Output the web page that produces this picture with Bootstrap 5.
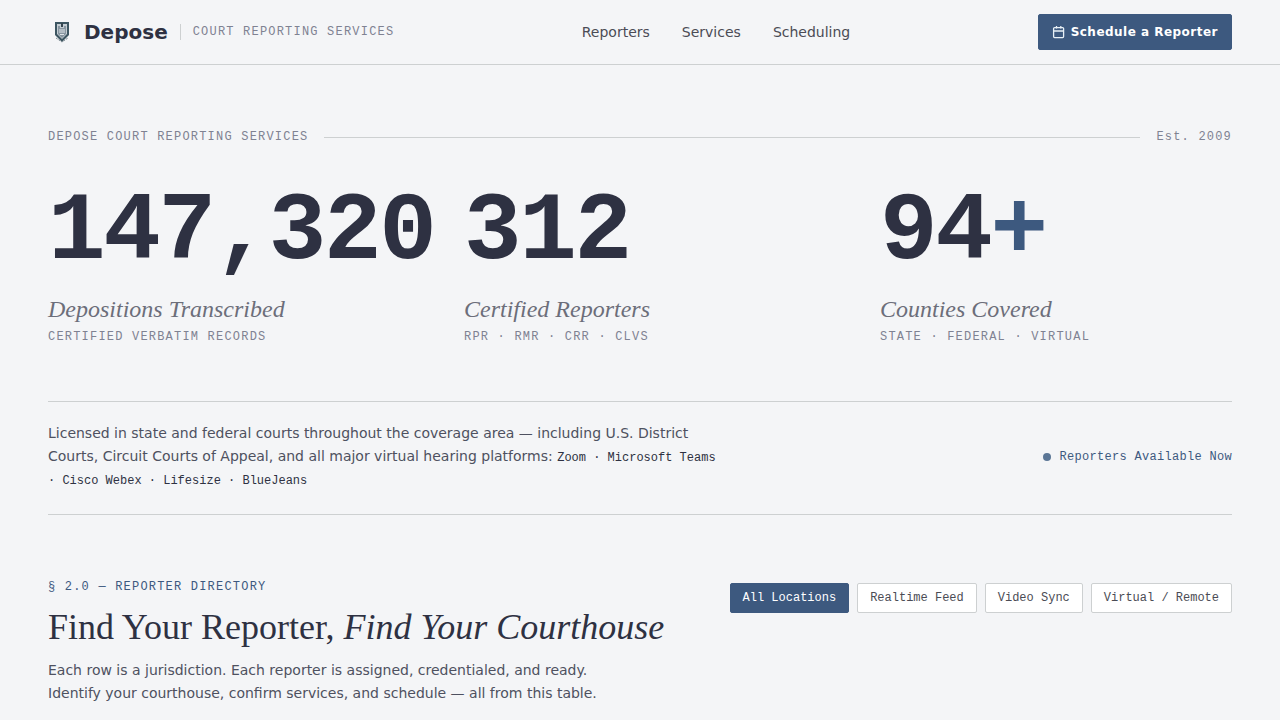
<!DOCTYPE html>
<html lang="en">
<head>
<meta charset="utf-8">
<meta name="viewport" content="width=device-width, initial-scale=1">
<title>Depose Court Reporting Services</title>
<link href="https://cdn.jsdelivr.net/npm/bootstrap@5.3.0/dist/css/bootstrap.min.css" rel="stylesheet">
<style>
  :root {
    --ink: #2e3142;
    --body: #4e5160;
    --muted-ink: #7f8292;
    --accent: #3d597f;
    --rule: #cdd0d1;
    --paper: #f4f5f7;
  }
  body {
    background: var(--paper);
    color: var(--body);
    font-family: "DejaVu Sans", sans-serif;
    font-size: 14px;
    line-height: 23px;
  }
  .mono { font-family: "Liberation Mono", monospace; font-size: 12px; line-height: 18px; }
  .spaced { letter-spacing: .1em; color: var(--muted-ink); }
  .serif { font-family: "Liberation Serif", serif; }
  .accent { color: var(--accent); }
  .site-header { min-height: 65px; border-bottom: 1px solid var(--rule); }
  .brand-name { font-size: 20px; line-height: 30px; font-weight: 700; color: var(--ink); }
  .brand-rule { width: 1px; height: 16px; margin: 0 12px; background: var(--rule); }
  .site-nav { gap: 32px; }
  .site-nav .nav-link { padding: 0; color: #4b4c55; }
  .btn-schedule {
    --bs-btn-color: #fff;
    --bs-btn-bg: var(--accent);
    --bs-btn-border-color: var(--accent);
    --bs-btn-hover-color: #fff;
    --bs-btn-hover-bg: #314a6c;
    --bs-btn-font-size: 12px;
    --bs-btn-font-weight: 700;
    --bs-btn-line-height: 18px;
    --bs-btn-padding-x: 13px;
    --bs-btn-padding-y: 8px;
    --bs-btn-border-radius: 2px;
    gap: 5px;
    letter-spacing: .04em;
  }
  .hero { padding-top: 63px; }
  .eyebrow-rule { height: 1px; background: var(--rule); }
  .stats { --bs-gutter-x: 64px; margin-top: 39px; }
  .figure-number {
    font-family: "Liberation Mono", monospace;
    font-size: 96px; line-height: 96px; font-weight: 700;
    letter-spacing: -.025em; color: var(--ink); white-space: nowrap;
  }
  .figure-label { font-size: 24px; line-height: 36px; font-style: italic; color: #6c6e7a; margin: 10px 0 1px; }
  .licence {
    margin-top: 55px; padding: 20px 0 23px;
    border-top: 1px solid var(--rule); border-bottom: 1px solid var(--rule);
  }
  .licence p { max-width: 672px; }
  .platforms { color: var(--ink); }
  .available { letter-spacing: .025em; }
  .status-dot { width: 8px; height: 8px; background: #5b7696; }
  .directory { padding: 63px 0 32px; }
  .directory h2 { font-size: 36px; line-height: 44px; font-weight: 400; color: var(--ink); margin: 9px 0 10px; }
  .directory p { max-width: 560px; }
  .btn-filter {
    --bs-btn-font-family: "Liberation Mono", monospace;
    --bs-btn-font-size: 12px;
    --bs-btn-line-height: 18px;
    --bs-btn-padding-x: 12px;
    --bs-btn-padding-y: 5px;
    --bs-btn-border-radius: 2px;
    --bs-btn-color: #4b4c55;
    --bs-btn-bg: #fff;
    --bs-btn-border-color: var(--rule);
    --bs-btn-hover-color: var(--ink);
    --bs-btn-hover-border-color: var(--accent);
    --bs-btn-active-color: #fff;
    --bs-btn-active-bg: var(--accent);
    --bs-btn-active-border-color: var(--accent);
  }
  .filters { margin-top: 5px; }
</style>
</head>
<body>
<header class="site-header d-flex flex-wrap align-items-center justify-content-between px-5">
  <div class="d-flex align-items-center">
    <a href="#" class="d-flex align-items-center gap-2 text-decoration-none">
      <svg width="28" height="28" viewBox="0 0 28 28" aria-hidden="true">
        <path d="M7 4h14v13l-7 7-7-7z" fill="#3c5561"/>
        <path d="M9 6h10v10l-5 5-5-5z" fill="#c3ccd2"/>
        <path d="M10 8h2v2h4V8h2v8l-4 4-4-4z" fill="#8795a0"/>
        <path d="M13 5h2v4h-2z" fill="#34444f"/>
        <path d="M11 12h6M11 14h6M12 16.500h4" stroke="#dfe5e9" fill="none"/>
        <path d="M8 20l6 4 6-4" stroke="#7d8b94" stroke-dasharray="2 1" fill="none"/>
      </svg>
      <span class="brand-name">Depose</span>
    </a>
    <span class="brand-rule"></span>
    <span class="mono spaced">COURT REPORTING SERVICES</span>
  </div>
  <nav class="nav site-nav" aria-label="Main">
    <a class="nav-link" href="#reporters">Reporters</a>
    <a class="nav-link" href="#services">Services</a>
    <a class="nav-link" href="#scheduling">Scheduling</a>
  </nav>
  <button type="button" class="btn btn-schedule d-flex align-items-center">
    <svg width="14" height="14" viewBox="0 0 14 14" fill="none" stroke="#e8f0f6" stroke-width="1.300" aria-hidden="true">
      <rect x="1.600" y="2.600" width="10" height="10" rx="1"/>
      <path d="M1.600 6h10M4.500 1v2.600M8.800 1v2.600"/>
    </svg>
    Schedule a Reporter
  </button>
</header>

<main class="px-5">
  <section class="hero">
    <div class="d-flex align-items-center gap-3">
      <span class="mono spaced">DEPOSE COURT REPORTING SERVICES</span>
      <span class="eyebrow-rule flex-grow-1"></span>
      <span class="mono spaced">Est. 2009</span>
    </div>
    <div class="row stats">
      <div class="col-4">
        <div class="figure-number">147,320</div>
        <div class="figure-label serif">Depositions Transcribed</div>
        <div class="mono spaced">CERTIFIED VERBATIM RECORDS</div>
      </div>
      <div class="col-4">
        <div class="figure-number">312</div>
        <div class="figure-label serif">Certified Reporters</div>
        <div class="mono spaced">RPR · RMR · CRR · CLVS</div>
      </div>
      <div class="col-4">
        <div class="figure-number">94<span class="accent">+</span></div>
        <div class="figure-label serif">Counties Covered</div>
        <div class="mono spaced">STATE · FEDERAL · VIRTUAL</div>
      </div>
    </div>
    <div class="licence d-flex align-items-center justify-content-between gap-4">
      <p class="mb-0">Licensed in state and federal courts throughout the coverage area — including U.S. District Courts, Circuit Courts of Appeal, and all major virtual hearing platforms: <span class="mono platforms">Zoom · Microsoft Teams · Cisco Webex · Lifesize · BlueJeans</span></p>
      <div class="d-flex align-items-center gap-2 mono accent available">
        <span class="status-dot rounded-circle"></span>
        <span>Reporters Available Now</span>
      </div>
    </div>
  </section>

  <section class="directory d-flex align-items-start justify-content-between" id="reporters">
    <div>
      <div class="mono spaced accent">§ 2.0 — REPORTER DIRECTORY</div>
      <h2 class="serif">Find Your Reporter, <em>Find Your Courthouse</em></h2>
      <p class="mb-0">Each row is a jurisdiction. Each reporter is assigned, credentialed, and ready. Identify your courthouse, confirm services, and schedule — all from this table.</p>
    </div>
    <div class="filters d-flex flex-wrap gap-2" role="group" aria-label="Filter reporters">
      <button type="button" class="btn btn-filter active" aria-pressed="true">All Locations</button>
      <button type="button" class="btn btn-filter" aria-pressed="false">Realtime Feed</button>
      <button type="button" class="btn btn-filter" aria-pressed="false">Video Sync</button>
      <button type="button" class="btn btn-filter" aria-pressed="false">Virtual / Remote</button>
    </div>
  </section>
</main>
<script src="https://cdn.jsdelivr.net/npm/bootstrap@5.3.0/dist/js/bootstrap.bundle.min.js"></script>
</body>
</html>
